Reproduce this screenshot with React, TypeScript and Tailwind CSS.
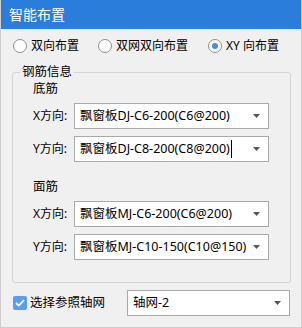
import React from 'react';

const font = "font-['Noto_Sans','Noto_Sans_CJK_SC',sans-serif]";

interface RadioProps {
  label: string;
  checked?: boolean;
}

const Radio: React.FC<RadioProps> = ({ label, checked }) => (
  <div className="flex items-center gap-[4px]">
    <span className="w-[14px] h-[14px] rounded-full border border-[#8e8e8e] bg-white flex items-center justify-center">
      {checked && <span className="w-[6px] h-[6px] rounded-full bg-[#3d8ee8]" />}
    </span>
    <span className="text-[12px] leading-[16px] text-black">{label}</span>
  </div>
);

interface SelectProps {
  value: string;
  caret?: boolean;
  className?: string;
}

const Select: React.FC<SelectProps> = ({ value, caret, className }) => (
  <div
    className={`h-[26px] bg-white border border-[#a9a9a9] flex items-center pl-[5px] pr-[8px] ${className ?? ''}`}
  >
    <span className="text-[12.5px] leading-[16px] text-black whitespace-nowrap">{value}</span>
    {caret && <span className="w-[1px] h-[18px] bg-black ml-[1px]" />}
    <svg className="ml-auto" width="7" height="4" viewBox="0 0 7 4">
      <path d="M0 0H7L3.5 4Z" fill="#555" />
    </svg>
  </div>
);

const Row: React.FC<{ label: string; value: string; caret?: boolean }> = ({ label, value, caret }) => (
  <div className="flex items-center">
    <span className="w-[41px] text-[12px] leading-[16px] text-black">{label}</span>
    <Select value={value} caret={caret} className="w-[195px]" />
  </div>
);

export default function App() {
  return (
    <div className={`w-[302px] h-[328px] bg-[#f0f0f0] border-x border-b border-[#cdcdcd] flex flex-col ${font}`}>
      {/* Title */}
      <div className="h-[29px] bg-[#2b7ddb] text-white text-[14px] flex items-center pl-[8px] shrink-0">
        智能布置
      </div>

      {/* Mode */}
      <div className="flex items-center mt-[9px] pl-[12px] h-[16px]">
        <Radio label="双向布置" />
        <div className="ml-[19px]">
          <Radio label="双网双向布置" />
        </div>
        <div className="ml-[20px]">
          <Radio label="XY 向布置" checked />
        </div>
      </div>

      {/* Group */}
      <fieldset className="mt-[10px] ml-[11px] w-[279px] border border-[#d3d3d3] rounded-[3px] pl-[20px] pb-[22px] pt-[1px]">
        <legend className="ml-[-13px] px-[2px] text-[12.5px] leading-[16px] text-black">钢筋信息</legend>
        <div className="text-[12.5px] leading-[16px] text-black">底筋</div>
        <div className="flex flex-col gap-[7px] mt-[6px]">
          <Row label="X方向:" value="飘窗板DJ-C6-200(C6@200)" />
          <Row label="Y方向:" value="飘窗板DJ-C8-200(C8@200)" caret />
        </div>
        <div className="text-[12.5px] leading-[16px] text-black mt-[17px]">面筋</div>
        <div className="flex flex-col gap-[7px] mt-[6px]">
          <Row label="X方向:" value="飘窗板MJ-C6-200(C6@200)" />
          <Row label="Y方向:" value="飘窗板MJ-C10-150(C10@150)" />
        </div>
      </fieldset>

      {/* Axis */}
      <div className="flex items-center mt-[7px] pl-[12px]">
        <span className="w-[14px] h-[14px] rounded-[2px] bg-[#5a9ded] flex items-center justify-center">
          <svg width="10" height="8" viewBox="0 0 10 8">
            <path d="M1 4L3.8 6.6L9 1.2" fill="none" stroke="#fff" strokeWidth="1.8" />
          </svg>
        </span>
        <span className="ml-[3px] text-[12.5px] leading-[16px] text-black">选择参照轴网</span>
        <Select value="轴网-2" className="ml-auto mr-[11px] w-[163px] pl-[4px]" />
      </div>
    </div>
  );
}
